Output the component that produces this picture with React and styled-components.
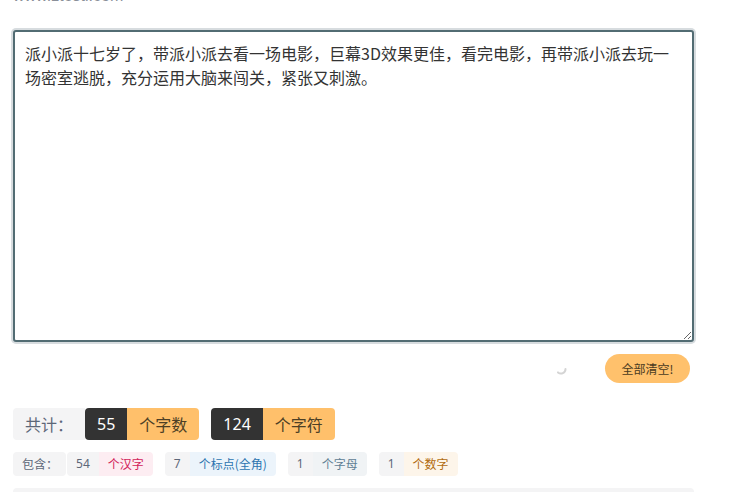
import React from 'react';
import styled, { createGlobalStyle } from 'styled-components';

const GlobalStyle = createGlobalStyle`
  body {
    margin: 0;
    background: #fff;
    font-family: "Noto Sans CJK SC", "Noto Sans", sans-serif;
    overflow: hidden;
  }
`;

const text = '派小派十七岁了，带派小派去看一场电影，巨幕3D效果更佳，看完电影，再带派小派去玩一场密室逃脱，充分运用大脑来闯关，紧张又刺激。';

const details = [
  { num: 54, label: '个汉字', tone: 'pink' },
  { num: 7, label: '个标点(全角)', tone: 'blue' },
  { num: 1, label: '个字母', tone: 'gray' },
  { num: 1, label: '个数字', tone: 'orange' }
];

const tones = {
  pink: { bg: '#fdedf2', fg: '#d2245a' },
  blue: { bg: '#ecf4fb', fg: '#2d74b0' },
  gray: { bg: '#f0f3f5', fg: '#5f8094' },
  orange: { bg: '#fdf5ea', fg: '#b26c10' }
};

const App = () => {
  return (
    <StyledPage>
      <GlobalStyle />
      <StyledSite>www.ztestl.com</StyledSite>
      <StyledTextarea defaultValue={text} />
      <StyledActions>
        <StyledSpinner viewBox="0 0 12 12">
          <path d="M10.5 6 A4.5 4.5 0 0 1 3 9.4" fill="none" stroke="#d4d4d4" strokeWidth="2" strokeLinecap="round" />
        </StyledSpinner>
        <StyledClear>全部清空!</StyledClear>
      </StyledActions>
      <StyledTotals>
        <StyledTotalLabel>共计：</StyledTotalLabel>
        <StyledGroup>
          <StyledCount>55</StyledCount>
          <StyledUnit>个字数</StyledUnit>
        </StyledGroup>
        <StyledGroup>
          <StyledCount>124</StyledCount>
          <StyledUnit>个字符</StyledUnit>
        </StyledGroup>
      </StyledTotals>
      <StyledDetails>
        <StyledDetailLabel>包含：</StyledDetailLabel>
        {details.map((d, i) => (
          <StyledDetail key={i}>
            <StyledDetailNum>{d.num}</StyledDetailNum>
            <StyledDetailUnit $tone={d.tone}>{d.label}</StyledDetailUnit>
          </StyledDetail>
        ))}
      </StyledDetails>
      <StyledFooter />
    </StyledPage>
  );
};

export default App;

const StyledPage = styled.div`
  width: 681px;
  padding-left: 13px;
  display: flex;
  flex-direction: column;
`;

const StyledSite = styled.div`
  margin-top: -14px;
  height: 20px;
  line-height: 20px;
  font-size: 16px;
  color: #8a8f99;
  font-family: "Liberation Sans", sans-serif;
  margin-bottom: 24px;
`;

const StyledTextarea = styled.textarea`
  box-sizing: border-box;
  width: 681px;
  height: 312px;
  padding: 9px 10px;
  border: 2px solid #526c73;
  border-radius: 3px;
  box-shadow: 0 0 0 2px #d7dcdf;
  font-family: "Noto Sans CJK SC", sans-serif;
  font-size: 16px;
  line-height: 24px;
  color: #333;
  resize: vertical;
  outline: none;
`;

const StyledActions = styled.div`
  display: flex;
  justify-content: flex-end;
  align-items: center;
  gap: 38px;
  margin-top: 12px;
  padding-right: 4px;
`;

const StyledSpinner = styled.svg`
  width: 12px;
  height: 12px;
`;

const StyledClear = styled.button`
  height: 29px;
  width: 85px;
  border: none;
  border-radius: 15px;
  background: #ffc16c;
  color: #4a3b22;
  font-family: "Noto Sans CJK SC", sans-serif;
  font-size: 12px;
  padding: 0;
`;

const StyledTotals = styled.div`
  display: flex;
  gap: 12px;
  margin-top: 25px;
  height: 32px;
  font-size: 16px;
  line-height: 32px;
`;

const StyledTotalLabel = styled.div`
  background: #f4f4f5;
  color: #5d6778;
  border-radius: 4px 0 0 4px;
  padding: 0 12px;
  width: 48px;
  margin-right: -12px;
`;

const StyledGroup = styled.div`
  display: flex;
  border-radius: 4px;
  overflow: hidden;
`;

const StyledCount = styled.div`
  background: #333;
  color: #fff;
  padding: 0 12px;
  font-family: "Noto Sans", sans-serif;
`;

const StyledUnit = styled.div`
  background: #ffc06b;
  color: #4d3f25;
  padding: 0 12px;
`;

const StyledDetails = styled.div`
  display: flex;
  gap: 12px;
  margin-top: 12px;
  height: 24px;
  line-height: 24px;
  font-size: 12px;
`;

const StyledDetailLabel = styled.div`
  background: #f4f4f5;
  color: #5d6778;
  border-radius: 4px;
  padding: 0 8px 0 9px;
  margin-right: -11px;
`;

const StyledDetail = styled.div`
  display: flex;
  border-radius: 4px;
  overflow: hidden;
`;

const StyledDetailNum = styled.div`
  background: #f4f4f5;
  color: #5d6778;
  padding: 0 9px;
  font-family: "Noto Sans", sans-serif;
`;

const StyledDetailUnit = styled.div`
  background: ${p => tones[p.$tone].bg};
  color: ${p => tones[p.$tone].fg};
  padding: 0 9px;
`;

const StyledFooter = styled.div`
  margin-top: 12px;
  height: 20px;
  background: #f4f4f5;
  border-radius: 4px 4px 0 0;
`;
